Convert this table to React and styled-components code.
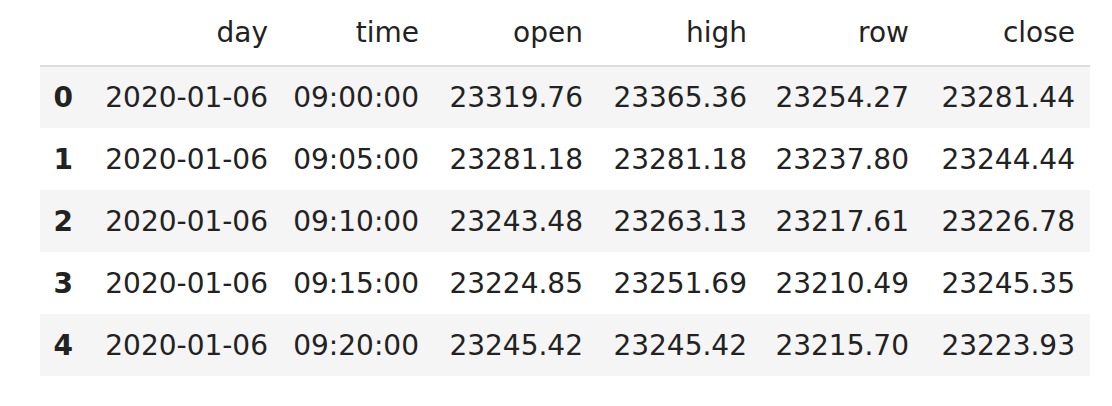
import React from 'react';
import styled, { createGlobalStyle } from 'styled-components';

const GlobalStyle = createGlobalStyle`
  body {
    margin: 0;
    padding: 0;
    background: #ffffff;
    font-family: 'DejaVu Sans', 'Noto Sans CJK JP', sans-serif;
    color: #222222;
  }
`;

const Wrapper = styled.div`
  padding: 0 0 0 40px;
`;

const Table = styled.table`
  border-collapse: collapse;
  border-spacing: 0;
  font-size: 28px;
  table-layout: fixed;
  width: 1050px;
`;

const HeadCell = styled.th`
  font-weight: normal;
  text-align: right;
  height: 65px;
  padding: 0 15px 0 8px;
  vertical-align: middle;
  border-bottom: 2px solid #dcdcdc;
  white-space: nowrap;
`;

const Row = styled.tr`
  background: ${(p) => (p.$striped ? '#f5f5f5' : '#ffffff')};
  height: 62px;
`;

const IndexCell = styled.th`
  font-weight: bold;
  text-align: right;
  padding: 0 15px 0 8px;
`;

const Cell = styled.td`
  text-align: right;
  padding: 0 15px 0 8px;
  white-space: nowrap;
`;

const widths = [48, 195, 151, 164, 164, 162, 166];
const columns = ['day', 'time', 'open', 'high', 'row', 'close'];

const data = [
  ['2020-01-06', '09:00:00', '23319.76', '23365.36', '23254.27', '23281.44'],
  ['2020-01-06', '09:05:00', '23281.18', '23281.18', '23237.80', '23244.44'],
  ['2020-01-06', '09:10:00', '23243.48', '23263.13', '23217.61', '23226.78'],
  ['2020-01-06', '09:15:00', '23224.85', '23251.69', '23210.49', '23245.35'],
  ['2020-01-06', '09:20:00', '23245.42', '23245.42', '23215.70', '23223.93'],
];

const App = () => (
  <>
    <GlobalStyle />
    <Wrapper>
      <Table>
        <colgroup>
          {widths.map((w, i) => (
            <col key={i} style={{ width: w }} />
          ))}
        </colgroup>
        <thead>
          <tr>
            <HeadCell />
            {columns.map((c) => (
              <HeadCell key={c}>{c}</HeadCell>
            ))}
          </tr>
        </thead>
        <tbody>
          {data.map((row, i) => (
            <Row key={i} $striped={i % 2 === 0}>
              <IndexCell>{i}</IndexCell>
              {row.map((v, j) => (
                <Cell key={j}>{v}</Cell>
              ))}
            </Row>
          ))}
        </tbody>
      </Table>
    </Wrapper>
  </>
);

export default App;
